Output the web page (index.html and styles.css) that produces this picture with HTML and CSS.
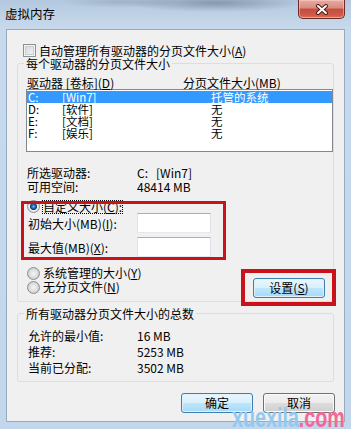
FILE: index.html
```html
<!DOCTYPE html>
<html lang="zh-CN">

<head>
    <meta charset="UTF-8" />
    <title>虚拟内存</title>
    <link rel="stylesheet" href="styles.css">
</head>

<body>
    <div class="window">
        <div class="titlebar">
            <span class="title">虚拟内存</span>
            <span class="close">
                <svg width="14" height="11" viewBox="0 0 14 11">
                    <path d="M3 2 L11 9 M11 2 L3 9" stroke="#4b1b17" stroke-width="4" stroke-linecap="round" />
                    <path d="M3 2 L11 9 M11 2 L3 9" stroke="#fff" stroke-width="2" stroke-linecap="round" />
                </svg>
            </span>
        </div>

        <div class="client">
            <div class="check-row"><span class="checkbox"></span>自动管理所有驱动器的分页文件大小(<u>A</u>)</div>

            <fieldset class="group group-drives">
                <legend>每个驱动器的分页文件大小</legend>
                <div class="list-head">
                    <span class="col-drive">驱动器 [卷标](<u>D</u>)</span>
                    <span>分页文件大小(MB)</span>
                </div>
                <div class="listbox">
                    <div class="row selected"><span class="c-letter">C:</span><span class="c-label">[Win7]</span><span>托管的系统</span></div>
                    <div class="row"><span class="c-letter">D:</span><span class="c-label">[软件]</span><span>无</span></div>
                    <div class="row"><span class="c-letter">E:</span><span class="c-label">[文档]</span><span>无</span></div>
                    <div class="row"><span class="c-letter">F:</span><span class="c-label">[娱乐]</span><span>无</span></div>
                </div>

                <div class="info">
                    <div class="kv"><span class="k">所选驱动器:</span><span>C:&nbsp;&nbsp;&nbsp;[Win7]</span></div>
                    <div class="kv"><span class="k">可用空间:</span><span>48414 MB</span></div>
                </div>

                <div class="custom">
                    <div class="radio-row"><span class="radio checked"></span><span class="focus">自定义大小(<u>C</u>):</span></div>
                    <div class="field"><label>初始大小(MB)(<u>I</u>):</label><input type="text" /></div>
                    <div class="field"><label>最大值(MB)(<u>X</u>):</label><input type="text" /></div>
                    <div class="mark mark-custom"></div>
                </div>

                <div class="bottom-opts">
                    <div class="radios">
                        <div class="radio-row"><span class="radio"></span>系统管理的大小(<u>Y</u>)</div>
                        <div class="radio-row"><span class="radio"></span>无分页文件(<u>N</u>)</div>
                    </div>
                    <button class="btn btn-blue btn-set">设置(<u>S</u>)</button>
                    <div class="mark mark-set"></div>
                </div>
            </fieldset>

            <fieldset class="group group-total">
                <legend>所有驱动器分页文件大小的总数</legend>
                <div class="kv"><span class="k">允许的最小值:</span><span>16 MB</span></div>
                <div class="kv"><span class="k">推荐:</span><span>5253 MB</span></div>
                <div class="kv"><span class="k">当前已分配:</span><span>3502 MB</span></div>
            </fieldset>

            <div class="actions">
                <button class="btn btn-blue">确定</button>
                <button class="btn">取消</button>
            </div>
        </div>

        <div class="watermark">xuexila<span>.com</span></div>
    </div>
</body>

</html>
```

FILE: styles.css
```css
body {
    margin: 0;
    font-family: "Noto Sans CJK SC", sans-serif;
    font-size: 12px;
    color: #000;
    background: #fff;
}

.window {
    position: relative;
    width: 351px;
    height: 429px;
    overflow: hidden;
    background:
        radial-gradient(ellipse 90px 9px at 215px 3px, rgba(80, 92, 110, 0.45), transparent),
        radial-gradient(ellipse 60px 6px at 120px 2px, rgba(120, 135, 155, 0.35), transparent),
        linear-gradient(180deg, #b3c8df 0%, #c8d9ec 28px, #c2d6ec 100%);
}

.titlebar {
    display: flex;
    justify-content: space-between;
    align-items: flex-start;
    height: 29px;
    padding: 0 6px 0 5px;
    box-sizing: border-box;
}

.title {
    margin-top: 7px;
    line-height: 14px;
    font-size: 12.5px;
}

.close {
    display: flex;
    align-items: center;
    justify-content: center;
    width: 47px;
    height: 19px;
    box-sizing: border-box;
    border: 1px solid #6e2b25;
    border-top: none;
    border-radius: 0 0 5px 5px;
    background: linear-gradient(180deg, #e7aba2 0%, #d98a7f 45%, #c54c3e 50%, #cf5a48 85%, #e07a5e 100%);
    box-shadow: inset 0 0 0 1px rgba(255, 220, 210, 0.45);
}

.client {
    margin: 0 6px;
    height: 393px;
    box-sizing: border-box;
    border: 1px solid #98aabd;
    background: #f0f0f0;
}

.check-row {
    display: flex;
    align-items: center;
    height: 13px;
    line-height: 13px;
    margin-top: 14px;
    padding-left: 16px;
}

.checkbox {
    width: 13px;
    height: 13px;
    box-sizing: border-box;
    margin-right: 3px;
    border: 1px solid #8e8f8f;
    background: linear-gradient(135deg, #cfd3d7, #f7f7f7);
    box-shadow: inset 0 0 0 1px #f4f4f4, inset 0 0 0 2px #c9cdd1;
}

.group {
    margin: 0 10px;
    padding: 6px 0 3px 8px;
    min-width: 0;
    border: 1px solid #d5dfe5;
    border-radius: 3px;
}

.group legend {
    padding: 0 2px;
    margin-left: -2px;
    line-height: 13px;
}

.group-total {
    margin-top: 5px;
    padding: 8px 0 6px 8px;
}

.list-head {
    display: flex;
    line-height: 13px;
    padding-left: 1px;
}

.col-drive {
    width: 156px;
}

.listbox {
    width: 307px;
    height: 63px;
    box-sizing: border-box;
    padding: 1px 0;
    border: 1px solid #828790;
    background: #fff;
}

.row {
    display: flex;
    height: 12px;
    line-height: 12px;
    padding-left: 1px;
    font-size: 11.5px;
}

.row.selected {
    background: #3399ff;
    color: #fff;
}

.c-letter {
    width: 34px;
}

.c-label {
    width: 149px;
}

.info {
    margin-top: 14px;
}

.kv {
    display: flex;
    line-height: 14px;
    padding-left: 1px;
}

.k {
    width: 110px;
}

.group-total .kv {
    line-height: 15px;
    padding-left: 2px;
}

.group-total .kv + .kv {
    margin-top: 1px;
}

.group-total .k {
    width: 109px;
}

.custom {
    position: relative;
    margin-top: 6px;
}

.radio-row {
    display: flex;
    align-items: center;
    height: 13px;
    line-height: 13px;
    padding-left: 1px;
}

.radios .radio-row {
    height: 14px;
    line-height: 14px;
}

.radio {
    width: 13px;
    height: 13px;
    box-sizing: border-box;
    margin-right: 3px;
    border: 1px solid #8c8f92;
    border-radius: 50%;
    background: radial-gradient(circle at 50% 50%, #f4f4f4 0, #e4e4e4 3px, #cfcfcf 5.5px);
}

.radio.checked {
    background: radial-gradient(circle at 50% 50%, #7cc0ee 0, #2b6fb3 1.6px, #123f6e 3.3px, #f7f7f7 3.9px, #dcdcdc 5.5px);
}

.focus {
    line-height: 12px;
    outline: 1px dotted #000;
}

.field {
    display: flex;
    align-items: center;
    height: 20px;
    padding-left: 2px;
}

.field + .field {
    margin-top: 4px;
}

.field label {
    width: 109px;
}

.field input {
    width: 74px;
    height: 20px;
    box-sizing: border-box;
    margin: 0;
    padding: 0 2px;
    border: 1px solid;
    border-color: #abadb3 #dbdfe6 #e3e9ef #e2e3ea;
    background: #fff;
    font: inherit;
}

.bottom-opts {
    position: relative;
    display: flex;
    justify-content: space-between;
    margin-top: 9px;
}

.btn {
    width: 72px;
    height: 20px;
    padding: 0;
    border: 1px solid #707070;
    border-radius: 3px;
    background: linear-gradient(180deg, #f2f2f2 0%, #ebebeb 50%, #dddddd 50%, #cfcfcf 100%);
    box-shadow: inset 0 0 0 1px #fbfbfb;
    font: inherit;
    color: #000;
    line-height: 18px;
}

.btn-blue {
    border-color: #3c7fb1;
    background: linear-gradient(180deg, #eaf6fd 0%, #d9f0fc 50%, #bee6fd 50%, #a7d9f5 100%);
    box-shadow: inset 0 0 0 1px #dff2fc;
}

.btn-set {
    margin-top: 12px;
    margin-right: 8px;
}

.mark {
    position: absolute;
    box-sizing: border-box;
    border: 3px solid #c9121c;
}

.mark-custom {
    left: -5px;
    top: 1px;
    width: 205px;
    height: 59px;
}

.mark-set {
    left: 215px;
    top: 3px;
    width: 95px;
    height: 37px;
    border-width: 4px;
}

.actions {
    display: flex;
    justify-content: flex-end;
    gap: 10px;
    margin-top: 11px;
    padding-right: 9px;
}

.watermark {
    position: absolute;
    left: 232px;
    top: 407px;
    font-family: "Liberation Sans", sans-serif;
    font-weight: bold;
    font-size: 27px;
    line-height: 22px;
    color: #93c9ee;
    transform: scaleX(0.73);
    transform-origin: 0 0;
    white-space: nowrap;
}

.watermark span {
    color: #f2689a;
}
```
